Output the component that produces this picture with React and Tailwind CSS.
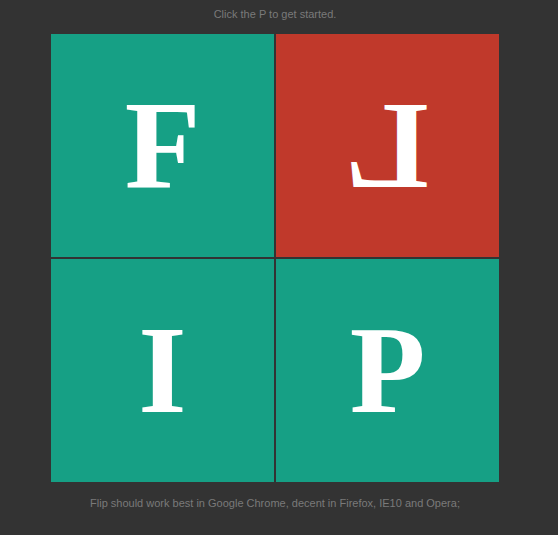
import React, { useState } from "react";

const tiles = [
  { letter: "F", flipped: false },
  { letter: "L", flipped: true },
  { letter: "I", flipped: false },
  { letter: "P", flipped: false },
];

export default function App() {
  const [active, setActive] = useState(1);

  return (
    <div className="min-h-[535px] bg-[#333333] font-['Liberation_Sans',Arial,sans-serif]">
      <div className="w-[550px]">
        <p className="pt-[8px] text-center text-[11px] leading-[13px] text-[#7a7a7a]">
          Click the P to get started.
        </p>
        <div className="mx-auto mt-[13px] grid w-[448px] grid-cols-2 gap-[2px]">
          {tiles.map((tile, i) => (
            <div
              key={i}
              onClick={() => setActive(i)}
              className={
                "flex h-[223px] cursor-pointer items-center justify-center " +
                (active === i ? "bg-[#c0392b]" : "bg-[#16a085]")
              }
            >
              <span
                className={
                  "font-['Liberation_Serif',Georgia,serif] text-[124px] font-bold leading-none text-white " +
                  (tile.flipped ? "-scale-x-100" : "")
                }
              >
                {tile.letter}
              </span>
            </div>
          ))}
        </div>
        <p className="mt-[15px] text-center text-[11px] leading-[13px] text-[#7a7a7a]">
          Flip should work best in Google Chrome, decent in Firefox, IE10 and Opera;
        </p>
      </div>
    </div>
  );
}
